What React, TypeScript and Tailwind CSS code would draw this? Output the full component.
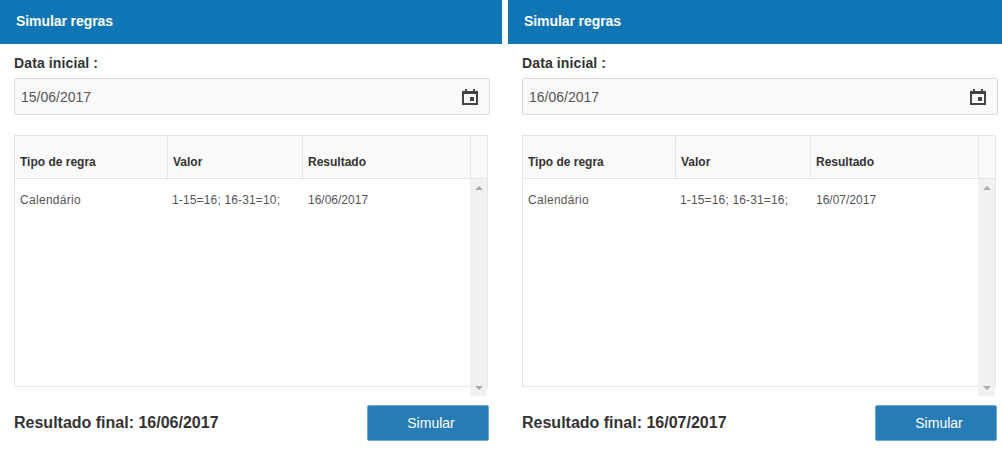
import React from 'react';

const CalendarIcon = () => (
  <svg width="16" height="16" viewBox="0 0 16 16" className="shrink-0" fill="#444444">
    <path d="M0 2h3V0h2v2h6V0h2v2h3v14H0V2zm2 3v9h12V5H2z" fillRule="evenodd" />
    <rect x="8" y="8" width="4" height="4" />
  </svg>
);

const Panel = ({
  date,
  valor,
  resultado,
  className,
}: {
  date: string;
  valor: string;
  resultado: string;
  className: string;
}) => (
  <div className={`shrink-0 w-[502px] ${className}`}>
    <div className="h-11 flex items-center pl-4 pb-[2px] bg-[#0f75b5] text-white text-[14px] font-bold tracking-[-0.08px]">
      Simular regras
    </div>

    <div className="pl-[14px] pr-3">
      <div className="mt-[10px] h-[18px] leading-[18px] text-[14px] font-bold text-[#333] tracking-[0.12px]">
        Data inicial :
      </div>

      <div className="mt-[6px] h-[37px] flex items-center justify-between pl-[6px] pr-[11px] bg-[#f9f9f9] border border-[#dcdcdc] rounded-[2px] text-[14px] text-[#555]">
        <span className="pt-[2px]">{date}</span>
        <CalendarIcon />
      </div>

      <div className="relative mt-5 w-[474px] h-[252px] border border-[#e5e5e5] text-[12px] text-[#555]">
        <div className="flex h-[43px] bg-[#fafafa] border-b border-[#e5e5e5] font-bold text-[#333]">
          <div className="w-[153px] pl-[5px] pt-[17px] border-r border-[#e5e5e5]">Tipo de regra</div>
          <div className="w-[135px] pl-[5px] pt-[17px] border-r border-[#e5e5e5]">Valor</div>
          <div className="w-[168px] pl-[5px] pt-[17px] border-r border-[#e5e5e5]">Resultado</div>
          <div className="flex-1" />
        </div>
        <div className="flex pt-[12px]">
          <div className="w-[153px] pl-[5px] tracking-[0.3px]">Calendário</div>
          <div className="w-[135px] pl-[4px] tracking-[0.15px]">{valor}</div>
          <div className="w-[168px] pl-[5px]">{resultado}</div>
        </div>

        {/* scrollbar pokes out below the grid */}
        <div className="absolute left-[455px] top-[43px] w-[17px] h-[217px] bg-[#f1f1f1] flex flex-col items-center justify-between pt-[7px] pb-[6px]">
          <div className="w-0 h-0 border-x-[4px] border-x-transparent border-b-[4px] border-b-[#aaaaaa]" />
          <div className="w-0 h-0 border-x-[4px] border-x-transparent border-t-[4px] border-t-[#aaaaaa]" />
        </div>
      </div>

      <div className="mt-[18px] flex items-center justify-between w-[475px]">
        <span className="text-[16px] font-bold text-[#333]">Resultado final: {resultado}</span>
        <button className="w-[122px] h-9 pl-[6px] bg-[#277cb6] border border-[#6fa3ea] rounded-[2px] text-white text-[14px]">
          Simular
        </button>
      </div>
    </div>
  </div>
);

export default function App() {
  return (
    <div className="w-[1002px] h-[455px] overflow-hidden flex bg-white font-['Liberation_Sans',Arial,sans-serif]">
      <Panel date="15/06/2017" valor="1-15=16; 16-31=10;" resultado="16/06/2017" className="" />
      <Panel date="16/06/2017" valor="1-15=16; 16-31=16;" resultado="16/07/2017" className="ml-[6px]" />
    </div>
  );
}
